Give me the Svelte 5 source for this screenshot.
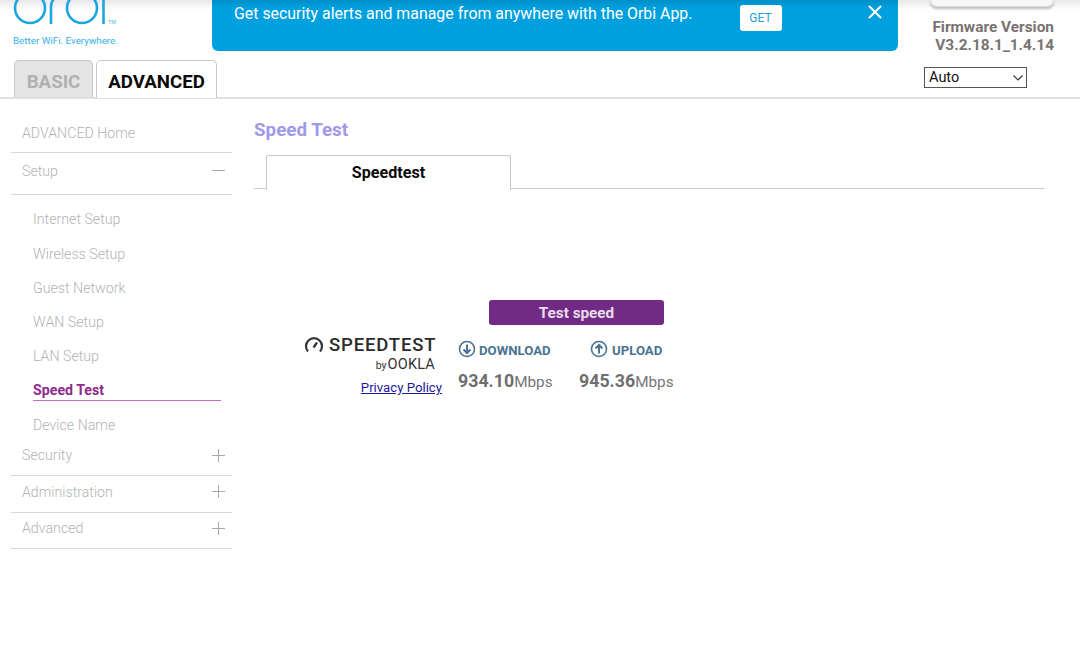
<script>
  const setup = ['Internet Setup', 'Wireless Setup', 'Guest Network', 'WAN Setup', 'LAN Setup', 'Speed Test', 'Device Name'];
  const closed = ['Security', 'Administration', 'Advanced'];
</script>

<div class="page">
  <header>
    <div class="brand">
      <svg class="logo" viewBox="0 0 120 26" width="120" height="26" aria-hidden="true">
        <g fill="none" stroke="#1ba6e2" stroke-width="2.6">
          <circle cx="30" cy="8" r="15" />
          <path d="M51 24V8q0-12 11-12" />
          <circle cx="82" cy="8" r="15" />
          <path d="M103.500 -4V24" />
        </g>
        <text x="108" y="23.500" font-size="5.500" fill="#5cb8dc" font-family="Roboto, sans-serif">TM</text>
      </svg>
      <div class="tagline">Better WiFi. Everywhere.</div>
    </div>
    <div class="banner">
      <span>Get security alerts and manage from anywhere with the Orbi App.</span>
      <button class="get">GET</button>
      <svg class="close" viewBox="0 0 14 14" width="14" height="14" aria-hidden="true"><path d="M1 1l12 12M13 1L1 13" stroke="#fff" stroke-width="2" /></svg>
    </div>
    <div class="firmware">
      <div class="pill"></div>
      <div class="fw">Firmware Version<br />V3.2.18.1_1.4.14</div>
    </div>
  </header>

  <div class="tabbar">
    <div class="tab basic">BASIC</div>
    <div class="tab advanced">ADVANCED</div>
    <div class="spacer"></div>
    <div class="langwrap">
      <select class="lang"><option>Auto</option></select>
      <svg class="chev" viewBox="0 0 10 6" width="10" height="6" aria-hidden="true"><path d="M.5 .5L5 5 9.500 .5" fill="none" stroke="#333" stroke-width="1.200" /></svg>
    </div>
  </div>

  <div class="body">
    <nav>
      <div class="top home">ADVANCED Home</div>
      <div class="top setup"><span>Setup</span><i class="minus"></i></div>
      <ul>
        {#each setup as item}
          <li class:active={item === 'Speed Test'}>{item}</li>
        {/each}
      </ul>
      {#each closed as item, n}
        <div class="top closed" class:first={n === 0}><span>{item}</span><i class="plus"></i></div>
      {/each}
    </nav>

    <main>
      <h1>Speed Test</h1>
      <div class="tabs"><div class="pagetab">Speedtest</div></div>
      <div class="test">
        <div class="ookla">
          <div class="st">
            <svg viewBox="0 0 20 18" width="20" height="18" aria-hidden="true"><path d="M4 15.500a8 8 0 1 1 12 0" fill="none" stroke="#333" stroke-width="2.200" /><path d="M9.500 11.500l3.500-5" stroke="#333" stroke-width="2.200" /></svg>
            <span>SPEEDTEST</span>
          </div>
          <div class="by"><small>by</small><b>OOKLA</b></div>
          <a href="#privacy">Privacy Policy</a>
        </div>
        <div class="results">
          <button class="run">Test speed</button>
          <div class="cols">
            <div class="col">
              <div class="lbl">
                <svg viewBox="0 0 18 18" width="18" height="18" aria-hidden="true"><rect x=".5" y=".5" width="17" height="17" fill="#f4f7f9" /><circle cx="9" cy="9" r="7.500" fill="#fff" stroke="#4a7391" stroke-width="1.600" /><path d="M9 4.500v8M5.500 9.500L9 13l3.500-3.500" fill="none" stroke="#4a7391" stroke-width="2" /></svg>
                <span>DOWNLOAD</span>
              </div>
              <div class="val"><b>934.10</b>Mbps</div>
            </div>
            <div class="col up">
              <div class="lbl">
                <svg viewBox="0 0 18 18" width="18" height="18" aria-hidden="true"><rect x=".5" y=".5" width="17" height="17" fill="#f4f7f9" /><circle cx="9" cy="9" r="7.500" fill="#fff" stroke="#4a7391" stroke-width="1.600" /><path d="M9 13.500v-8M5.500 8.500L9 5l3.500 3.500" fill="none" stroke="#4a7391" stroke-width="2" /></svg>
                <span>UPLOAD</span>
              </div>
              <div class="val"><b>945.36</b>Mbps</div>
            </div>
          </div>
        </div>
      </div>
    </main>
  </div>
</div>

<style>
  :global(body) { margin: 0; background: #fff; font-family: Roboto, "Liberation Sans", sans-serif; }
  .page { width: 1080px; height: 671px; overflow: hidden; }
  header { display: flex; height: 60px; background: linear-gradient(#e8e8e8, #fff 10px); }
  .brand { width: 212px; flex: none; }
  .logo { display: block; }
  .tagline { margin: 9px 0 0 13px; font-size: 9.8px; line-height: 12px; color: #33b1e6; }
  .banner { width: 686px; height: 51px; flex: none; box-sizing: border-box; background: linear-gradient(#008fc8, #00a0df 8px); border-radius: 0 0 6px 6px; display: flex; align-items: flex-start; color: #fff; font-size: 15.9px; padding: 5px 15px 0 22px; }
  .banner span { line-height: 18px; margin-right: 47px; white-space: nowrap; }
  .get { width: 42px; height: 26px; border: 0; border-radius: 3px; background: #fff; color: #1c9fd6; font: 12px Roboto, sans-serif; padding: 0; flex: none; }
  .close { margin-left: 86px; flex: none; }
  .firmware { flex: 1; text-align: right; padding-right: 26px; }
  .pill { width: 124px; height: 7px; margin-left: 32px; border: 1px solid #ddd; border-top: 0; border-radius: 0 0 10px 10px; box-shadow: 0 2px 3px #bbb; background: #f6f6f6; box-sizing: border-box; }
  .fw { margin-top: 11px; font-size: 15.4px; line-height: 18px; font-weight: 700; color: #7a7272; white-space: nowrap; }
  .tabbar { height: 39px; display: flex; align-items: flex-end; padding-left: 14px; border-bottom: 2px solid #e0e0e0; box-sizing: border-box; }
  .tab { box-sizing: border-box; font-size: 18.7px; font-weight: 700; text-align: center; border: 1px solid #c8c8c8; border-bottom: 0; border-radius: 5px 5px 0 0; line-height: 42px; height: 37px; }
  .basic { width: 79px; background: #e4e4e4; color: #b0b0b0; }
  .advanced { width: 121px; height: 38px; margin-left: 3px; background: #fff; color: #0a0a0a; margin-bottom: -1px; }
  .spacer { flex: 1; }
  .langwrap { align-self: flex-start; position: relative; margin: 7px 53px 0 0; width: 103px; height: 21px; }
  .lang { appearance: none; display: block; width: 103px; height: 21px; font: 14.5px Roboto, sans-serif; border: 1px solid #555; background: #fff; padding: 0 0 0 4px; border-radius: 0; color: #111; }
  .chev { position: absolute; right: 4px; top: 8px; pointer-events: none; }
  .body { display: flex; }
  nav { width: 221px; margin-left: 11px; flex: none; color: #b3b3b3; font-weight: 300; font-size: 14.2px; }
  .top { display: flex; justify-content: space-between; align-items: center; padding: 0 7px 0 11px; box-sizing: border-box; border-bottom: 1px solid #d8d8d8; }
  .home { height: 36px; margin-top: 18px; padding-bottom: 4px; }
  .setup { height: 42px; padding-bottom: 6px; }
  ul { list-style: none; margin: 0; padding: 7.4px 11px 0 22px; }
  li { height: 34.2px; line-height: 34px; position: relative; }
  li.active { color: #8e2a8b; font-weight: 700; }
  li.active::after { content: ''; position: absolute; left: 0; right: 0; bottom: 7px; height: 1px; background: #c66bc3; }
  .closed { height: 36.5px; padding-bottom: 5px; }
  .closed.first { height: 34.6px; padding-bottom: 7px; }
  i { width: 13px; height: 13px; position: relative; display: block; flex: none; }
  i::before { content: ''; position: absolute; left: 0; right: 0; top: 6px; height: 1px; background: #a8a8a8; }
  .plus::after { content: ''; position: absolute; top: 0; bottom: 0; left: 6px; width: 1px; background: #a8a8a8; }
  main { flex: 1; margin-left: 22px; width: 790px; }
  h1 { margin: 20px 0 0; font-size: 18.8px; line-height: 22px; font-weight: 700; color: #a099e8; }
  .tabs { width: 790px; height: 34px; margin-top: 14px; border-bottom: 1px solid #ccc; box-sizing: border-box; padding-left: 12px; }
  .pagetab { width: 245px; height: 35px; box-sizing: border-box; background: #fff; border: 1px solid #c8c8c8; border-bottom: 0; border-radius: 3px 3px 0 0; text-align: center; font-size: 16.1px; font-weight: 700; line-height: 33px; color: #0a0a0a; }
  .test { display: flex; margin-top: 111px; padding-left: 49px; }
  .ookla { width: 139px; margin-top: 35px; text-align: right; flex: none; }
  .st { display: flex; align-items: center; font-size: 18.5px; font-weight: 500; color: #2b2b2b; letter-spacing: .85px; gap: 5px; line-height: 20px; margin-left: 1px; white-space: nowrap; }
  .by { display: flex; justify-content: flex-end; align-items: baseline; gap: 1px; color: #333; line-height: 18px; margin: 1px 7px 0 0; }
  .by small { font-size: 10.5px; }
  .by b { font-size: 14.5px; font-weight: 400; letter-spacing: .2px; }
  a { color: #1f1a9c; font-size: 13.2px; line-height: 18px; display: block; margin-top: 4px; }
  .results { margin-left: 16px; flex: none; }
  .run { display: block; margin-left: 31px; width: 175px; height: 25px; border: 0; border-radius: 3px; background: #722b85; color: #e8ddeb; font: 700 15.3px Roboto, sans-serif; padding: 0; }
  .cols { display: flex; margin-top: 16px; }
  .col { width: 120px; }
  .lbl { display: flex; align-items: center; gap: 3px; font-size: 13.2px; font-weight: 700; color: #4a7391; line-height: 20px; }
  .lbl svg { margin-top: -5px; margin-bottom: -1px; }
  .up { margin-left: 1px; }
  .up .lbl { margin-left: 11px; gap: 4px; }
  .val { margin-top: 10px; font-size: 15.3px; color: #777; line-height: 20px; white-space: nowrap; }
  .val b { font-size: 17.8px; color: #6e6e6e; }
</style>
